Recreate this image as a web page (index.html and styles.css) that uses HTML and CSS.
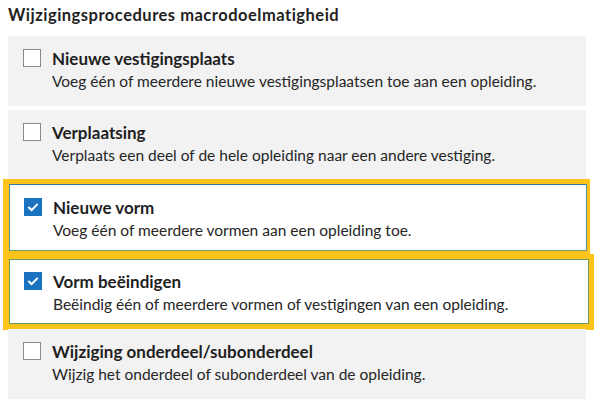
FILE: index.html
```html
<!DOCTYPE html>
<html lang="nl">
<head>
<meta charset="utf-8">
<title>Wijzigingsprocedures macrodoelmatigheid</title>
<link rel="stylesheet" href="styles.css">
</head>
<body>
<h2 class="heading">Wijzigingsprocedures macrodoelmatigheid</h2>
<div class="list">
  <label class="option">
    <span class="box"></span>
    <span class="text">
      <span class="title">Nieuwe vestigingsplaats</span>
      <span class="desc">Voeg één of meerdere nieuwe vestigingsplaatsen toe aan een opleiding.</span>
    </span>
  </label>
  <label class="option second">
    <span class="box"></span>
    <span class="text">
      <span class="title">Verplaatsing</span>
      <span class="desc">Verplaats een deel of de hele opleiding naar een andere vestiging.</span>
    </span>
  </label>
  <div class="ring ring-a">
    <label class="option checked card-a">
      <span class="box"><svg viewBox="0 0 18 18" width="18" height="18"><path d="M4.3 9.1 L7.6 12.1 L13.7 5.9" fill="none" stroke="#fff" stroke-width="2"/></svg></span>
      <span class="text">
        <span class="title">Nieuwe vorm</span>
        <span class="desc">Voeg één of meerdere vormen aan een opleiding toe.</span>
      </span>
    </label>
  </div>
  <div class="ring ring-b">
    <label class="option checked card-b">
      <span class="box"><svg viewBox="0 0 18 18" width="18" height="18"><path d="M4.3 9.1 L7.6 12.1 L13.7 5.9" fill="none" stroke="#fff" stroke-width="2"/></svg></span>
      <span class="text">
        <span class="title">Vorm beëindigen</span>
        <span class="desc">Beëindig één of meerdere vormen of vestigingen van een opleiding.</span>
      </span>
    </label>
  </div>
  <label class="option last">
    <span class="box"></span>
    <span class="text">
      <span class="title">Wijziging onderdeel/subonderdeel</span>
      <span class="desc">Wijzig het onderdeel of subonderdeel van de opleiding.</span>
    </span>
  </label>
</div>
</body>
</html>
```
FILE: styles.css
```css
html, body {
  margin: 0;
  background: #ffffff;
}
body {
  padding: 0 8px;
  font-family: Lato, "Open Sans", sans-serif;
  color: #222222;
  overflow: hidden;
}
.heading {
  margin: 0;
  padding-top: 5px;
  height: 31px;
  font-size: 16.5px;
  font-weight: 700;
  letter-spacing: 0.5px;
  line-height: 20px;
  color: #1f1f1f;
}
.list {
  display: flex;
  flex-direction: column;
  width: 578px;
}
.option {
  display: flex;
  align-items: flex-start;
  gap: 11px;
  background: #f2f2f2;
  padding: 13px 15px 0 15px;
  height: 70px;
  box-sizing: border-box;
}
.second {
  margin-top: 4px;
}
.box {
  flex: none;
  width: 18px;
  height: 18px;
  box-sizing: border-box;
  border: 1px solid #8a8a8a;
  background: #ffffff;
  display: flex;
  align-items: center;
  justify-content: center;
}
.checked .box {
  background: #1b72c0;
  border: none;
}
.text {
  display: flex;
  flex-direction: column;
  gap: 2px;
}
.title {
  font-size: 17px;
  font-weight: 700;
  line-height: 20px;
  color: #1f1f1f;
}
.desc {
  font-size: 15.5px;
  line-height: 20px;
  color: #262626;
}
.ring {
  background: #fcc419;
  margin-left: -5px;
}
.ring-a {
  margin-top: -1px;
  width: 587px;
  padding: 5px 3px 3px 6px;
  box-sizing: border-box;
}
.ring-b {
  width: 591px;
  padding: 5px 5px 6px 6px;
  box-sizing: border-box;
}
.checked {
  background: #ffffff;
  padding-top: 13px;
  padding-left: 14px;
}
.card-a {
  height: 67px;
  border: 1px solid #5f8e9a;
  border-top-color: #2f7cb0;
  border-bottom-color: #6f9a6a;
}
.card-b {
  height: 65px;
  border: 1px solid #6e9a5e;
  padding-top: 12px;
}
.last {
  margin-top: -1px;
}
```
